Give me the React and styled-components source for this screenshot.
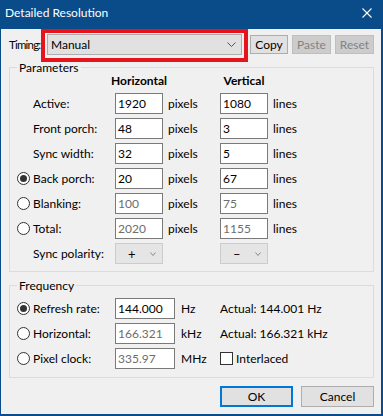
import React from 'react';
import styled, { createGlobalStyle } from 'styled-components';

const Global = createGlobalStyle`
  html, body { margin: 0; padding: 0; background: #ffffff; }
  body {
    font-family: Lato, "Noto Sans", sans-serif;
    font-size: 12px;
    color: #000000;
  }
  * { box-sizing: border-box; }
`;

const BLUE = '#0a4b89';

const Window = styled.div`
  width: 383px;
  height: 416px;
  background: #f0f0f0;
  border-style: solid;
  border-color: ${BLUE};
  border-width: 0 2px 2px 1px;
  display: flex;
  flex-direction: column;
`;

const TitleBar = styled.div`
  height: 29px;
  flex: none;
  background: ${BLUE};
  display: flex;
  align-items: flex-start;
  justify-content: space-between;
  padding: 6px 9px 0 4px;
`;

const Title = styled.span`
  color: #ffffff;
  font-size: 12px;
  line-height: 14px;
`;

const CloseIcon = styled.svg`
  width: 10px;
  height: 10px;
  margin-top: 2px;
`;

const TopRow = styled.div`
  display: flex;
  align-items: center;
  height: 21px;
  margin: 5px 0 0 8px;
`;

const TimingLabel = styled.span`
  width: 38px;
  flex: none;
  font-size: 11.5px;
  letter-spacing: -0.8px;
  white-space: nowrap;
`;

const ComboWrap = styled.div`
  position: relative;
  width: ${p => p.$w}px;
  height: 21px;
  flex: none;
`;

const Combo = styled.div`
  width: 100%;
  height: 100%;
  display: flex;
  align-items: center;
  background: ${p => (p.$muted ? '#e5e5e5' : '#e1e1e1')};
  border: 1px solid ${p => (p.$muted ? '#cccccc' : '#adadad')};
  padding-left: ${p => p.$pad}px;
  padding-right: ${p => p.$padR}px;
`;

const ComboText = styled.span`
  flex: 1;
  font-size: ${p => p.$size || 12}px;
`;

const Highlight = styled.span`
  position: absolute;
  top: -5px;
  left: -6px;
  right: -6px;
  bottom: -7px;
  border: 4px solid #e8141c;
  pointer-events: none;
`;

const Button = styled.div`
  flex: none;
  width: ${p => p.$w}px;
  height: ${p => p.$h}px;
  margin-left: ${p => p.$ml || 0}px;
  display: flex;
  align-items: center;
  justify-content: center;
  background: ${p => (p.$disabled ? '#cccccc' : '#e1e1e1')};
  color: ${p => (p.$disabled ? '#838383' : '#000000')};
  border: ${p => (p.$default ? '2px solid #0078d7' : p.$disabled ? '1px solid #bfbfbf' : '1px solid #adadad')};
`;

const Group = styled.fieldset`
  margin: ${p => p.$mt}px 7px 0 8px;
  padding: 0;
  border: 1px solid #dcdcdc;
  min-width: 0;
`;

const Legend = styled.legend`
  margin-left: 7px;
  padding: 0 2px;
  line-height: 15px;
  font-size: 12px;
`;

const Grid = styled.div`
  display: grid;
  grid-template-columns: ${p => p.$cols};
  grid-auto-rows: 21px;
  row-gap: 4px;
  align-items: center;
  padding: ${p => p.$pt}px 0 ${p => p.$pb}px 7px;
`;

const HeaderGrid = styled.div`
  display: grid;
  grid-template-columns: ${p => p.$cols};
  height: 12px;
  margin-bottom: 6px;
  padding-left: 7px;
`;

const HeaderCell = styled.div`
  grid-column: ${p => p.$col};
  font-weight: 700;
  line-height: 12px;
  white-space: nowrap;
  display: flex;
  justify-content: center;
`;

const Radio = styled.span`
  width: 13px;
  height: 13px;
  border-radius: 50%;
  border: 1px solid #333333;
  background: #ffffff;
  display: flex;
  align-items: center;
  justify-content: center;
  &::after {
    content: '';
    width: 7px;
    height: 7px;
    border-radius: 50%;
    background: ${p => (p.$checked ? '#333333' : 'transparent')};
  }
`;

const Label = styled.span`
  white-space: nowrap;
`;

const Field = styled.div`
  height: 21px;
  background: #ffffff;
  border: 1px solid #7a7a7a;
  padding: 0 2px;
  display: flex;
  align-items: center;
  color: ${p => (p.$disabled ? '#6d6d6d' : '#000000')};
`;

const Unit = styled.span`
  padding-left: ${p => p.$pl || 5}px;
  white-space: nowrap;
`;

const CheckRow = styled.div`
  display: flex;
  align-items: center;
  gap: 3px;
`;

const CheckBox = styled.span`
  width: 13px;
  height: 13px;
  border: 1px solid #333333;
  background: #ffffff;
`;

const Footer = styled.div`
  display: flex;
  justify-content: flex-end;
  gap: 8px;
  margin: 8px 7px 0 0;
`;

const Chevron = ({ w = 9, h = 5, color = '#555555' }) => (
  <svg width={w} height={h} viewBox={`0 0 ${w} ${h}`} style={{ flex: 'none' }}>
    <polyline points={`0.5,0.5 ${w / 2},${h - 0.5} ${w - 0.5},0.5`} fill="none" stroke={color} strokeWidth="1" />
  </svg>
);

const paramRows = [
  { radio: null, label: 'Active:', h: '1920', v: '1080' },
  { radio: null, label: 'Front porch:', h: '48', v: '3' },
  { radio: null, label: 'Sync width:', h: '32', v: '5' },
  { radio: true, label: 'Back porch:', h: '20', v: '67' },
  { radio: false, label: 'Blanking:', h: '100', v: '75', disabled: true },
  { radio: false, label: 'Total:', h: '2020', v: '1155', disabled: true },
];

const freqRows = [
  { checked: true, label: 'Refresh rate:', value: '144.000', unit: 'Hz', extra: 'Actual: 144.001 Hz' },
  { checked: false, label: 'Horizontal:', value: '166.321', unit: 'kHz', extra: 'Actual: 166.321 kHz', disabled: true },
  { checked: false, label: 'Pixel clock:', value: '335.97', unit: 'MHz', check: 'Interlaced', disabled: true },
];

const PARAM_COLS = '16px 82px 48px 57px 48px 1fr';

export default function App() {
  return (
    <>
      <Global />
      <Window>
        <TitleBar>
          <Title>Detailed Resolution</Title>
          <CloseIcon viewBox="0 0 10 10">
            <line x1="0.5" y1="0.5" x2="9.5" y2="9.5" stroke="#ffffff" strokeWidth="1.1" />
            <line x1="9.5" y1="0.5" x2="0.5" y2="9.5" stroke="#ffffff" strokeWidth="1.1" />
          </CloseIcon>
        </TitleBar>

        <TopRow>
          <TimingLabel>Timing:</TimingLabel>
          <ComboWrap $w={195}>
            <Combo $pad={3} $padR={5}>
              <ComboText>Manual</ComboText>
              <Chevron />
            </Combo>
            <Highlight />
          </ComboWrap>
          <Button $w={38} $h={19} $ml={8}>Copy</Button>
          <Button $w={39} $h={19} $ml={4} $disabled>Paste</Button>
          <Button $w={39} $h={19} $ml={4} $disabled>Reset</Button>
        </TopRow>

        <Group $mt={5}>
          <Legend>Parameters</Legend>
          <HeaderGrid $cols={PARAM_COLS}>
            <HeaderCell $col={3}>Horizontal</HeaderCell>
            <HeaderCell $col={5}>Vertical</HeaderCell>
          </HeaderGrid>
          <Grid $cols={PARAM_COLS} $pt={0} $pb={7}>
            {paramRows.map(r => (
              <React.Fragment key={r.label}>
                {r.radio === null ? <span /> : <Radio $checked={r.radio} />}
                <Label>{r.label}</Label>
                <Field $disabled={r.disabled}>{r.h}</Field>
                <Unit>pixels</Unit>
                <Field $disabled={r.disabled}>{r.v}</Field>
                <Unit>lines</Unit>
              </React.Fragment>
            ))}
            <span />
            <Label>Sync polarity:</Label>
            <Combo $muted $pad={12} $padR={6}>
              <ComboText $size={13}>+</ComboText>
              <Chevron w={6} h={4} color="#8a8a8a" />
            </Combo>
            <span />
            <Combo $muted $pad={12} $padR={6}>
              <ComboText $size={13}>–</ComboText>
              <Chevron w={6} h={4} color="#8a8a8a" />
            </Combo>
            <span />
          </Grid>
        </Group>

        <Group $mt={6}>
          <Legend>Frequency</Legend>
          <Grid $cols="16px 82px 60px 45px 1fr" $pt={5} $pb={8}>
            {freqRows.map(r => (
              <React.Fragment key={r.label}>
                <Radio $checked={r.checked} />
                <Label>{r.label}</Label>
                <Field $disabled={r.disabled}>{r.value}</Field>
                <Unit $pl={6}>{r.unit}</Unit>
                {r.check ? (
                  <CheckRow>
                    <CheckBox />
                    <Label>{r.check}</Label>
                  </CheckRow>
                ) : (
                  <Label>{r.extra}</Label>
                )}
              </React.Fragment>
            ))}
          </Grid>
        </Group>

        <Footer>
          <Button $w={73} $h={21} $default>OK</Button>
          <Button $w={73} $h={21}>Cancel</Button>
        </Footer>
      </Window>
    </>
  );
}
